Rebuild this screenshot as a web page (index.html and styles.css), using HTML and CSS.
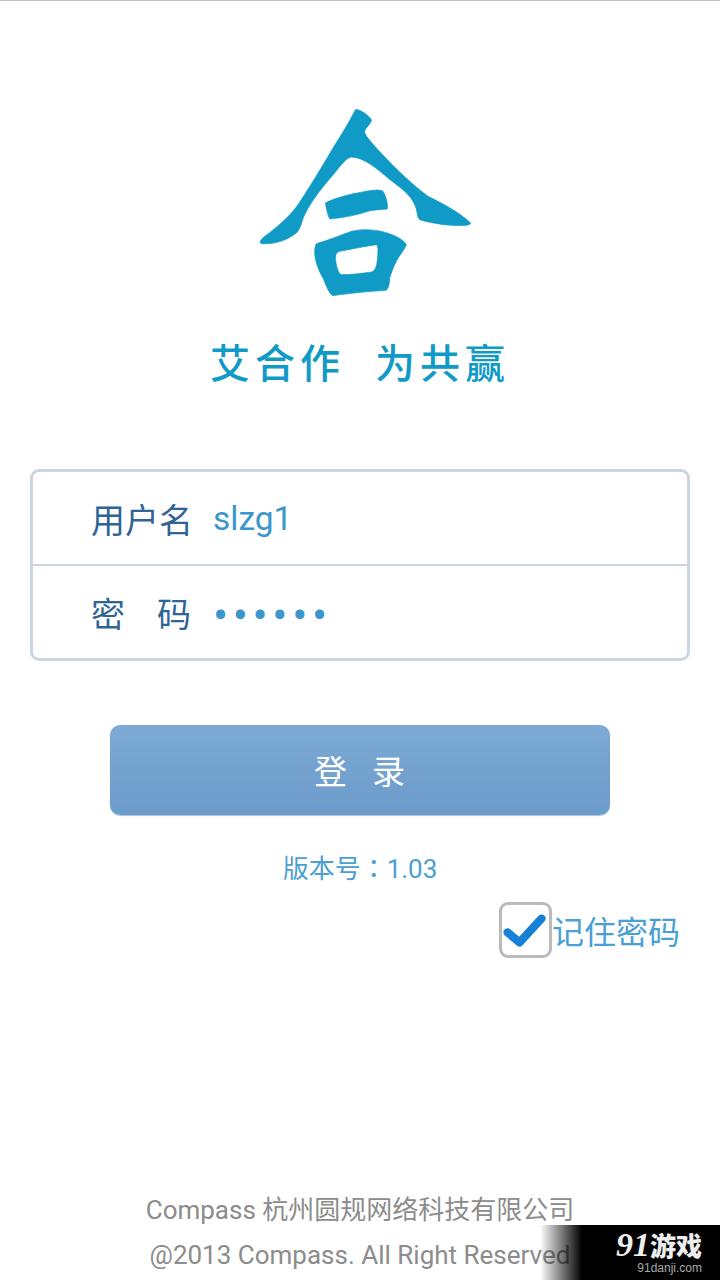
FILE: index.html
```html
<!DOCTYPE html>
<html lang="zh-CN">
<head>
    <meta charset="UTF-8">
    <meta name="viewport" content="width=device-width, initial-scale=1.0">
    <title>登录</title>
    <link rel="stylesheet" href="styles.css">
</head>
<body>
    <main class="page">
        <!-- Logo -->
        <svg class="logo" viewBox="170 55 645 570" role="img" aria-label="合">
            <path d="M462 60C475 58 500 75 510 90C512 100 495 110 490 125C490 135 500 145 510 158C560 215 620 275 680 320C720 340 770 365 808 400C805 410 780 408 750 407C720 405 680 398 655 390C645 380 650 365 640 345C625 310 590 290 560 265C525 235 490 205 450 202C435 205 420 225 400 250C370 285 335 325 310 375C300 395 300 415 285 430C255 455 210 465 180 462C172 458 178 450 190 440C225 415 265 380 290 345C320 300 360 235 395 175C420 135 445 95 462 60Z"/>
            <path d="M372 340C400 325 450 312 480 308C505 302 535 298 545 305C555 320 560 345 558 358C540 360 510 360 490 368C460 378 420 385 385 388C378 375 375 355 372 340Z"/>
            <path fill-rule="evenodd" d="M345 462C380 452 410 440 450 425C490 415 540 420 580 438C595 445 610 455 615 465C610 480 595 495 585 515C575 535 570 550 565 565C565 580 562 595 555 602C500 605 440 612 395 618C385 615 375 590 365 565C350 540 340 510 340 485C340 475 342 468 345 462ZM415 485C450 478 490 470 525 465C532 470 530 490 528 510C526 530 522 543 510 547C480 552 445 555 420 555C410 550 405 530 403 510C402 495 405 488 415 485Z"/>
        </svg>
        <div class="slogan"><span>艾合作</span><span>为共赢</span></div>

        <!-- Login form -->
        <section class="card">
            <div class="row">
                <span class="label">用户名</span>
                <span class="value">slzg1</span>
            </div>
            <div class="row">
                <span class="label label-wide">密码</span>
                <span class="dots">••••••</span>
            </div>
        </section>

        <button class="login" type="button">登录</button>
        <p class="version" lang="zh-TW">版本号：1.03</p>

        <div class="remember">
            <span class="check">
                <svg viewBox="0 0 50 40"><path d="M6 22L19 33L43 7"/></svg>
            </span>
            <span>记住密码</span>
        </div>

        <footer class="footer">
            <p>Compass 杭州圆规网络科技有限公司</p>
            <p>@2013 Compass. All Right Reserved</p>
        </footer>
    </main>

    <div class="watermark">
        <div class="wm-title"><span class="wm-num">91</span>游戏</div>
        <div class="wm-url">91danji.com</div>
    </div>
</body>
</html>
```

FILE: styles.css
```css
/* Basis */
* {
    box-sizing: border-box;
}

body {
    margin: 0;
    background-color: #fff;
    font-family: Roboto, "Noto Sans CJK SC", sans-serif;
}

p {
    margin: 0;
}

.page {
    position: relative;
    height: 1280px;
    overflow: hidden;
    border-top: 1px solid #c4c4c4;
    padding-top: 107px;
    display: flex;
    flex-direction: column;
    align-items: center;
}

.logo {
    width: 217px;
    height: 190px;
    margin-left: 10px;
    fill: #109ac6;
    stroke: #109ac6;
    stroke-width: 2;
    stroke-linejoin: round;
}

.slogan {
    margin-top: 42px;
    height: 50px;
    display: flex;
    gap: 30px;
    font-size: 40px;
    font-weight: 500;
    line-height: 50px;
    letter-spacing: 5px;
    color: #109ac6;
}

/* Formulier */
.card {
    width: 660px;
    height: 192px;
    margin-top: 79px;
    border: 3px solid #ccd6e2;
    border-radius: 9px;
    display: flex;
    flex-direction: column;
}

.row {
    flex: 1;
    display: flex;
    align-items: center;
    padding-left: 58px;
}

.row + .row {
    border-top: 2px solid #ccd6e2;
}

.label {
    width: 122px;
    font-size: 34px;
    color: #2f6496;
    white-space: nowrap;
}

.label-wide {
    letter-spacing: 32px;
}

.value {
    font-size: 33.5px;
    color: #3b96cc;
}

.dots {
    padding-top: 8px;
    font-size: 45px;
    line-height: 50px;
    letter-spacing: 4.6px;
    color: #3b96cc;
}

.login {
    width: 500px;
    height: 90px;
    margin-top: 64px;
    border: none;
    border-radius: 10px;
    background: linear-gradient(#7daad5, #6b9bca);
    box-shadow: 0 1px 1px #a9c3de;
    font-family: inherit;
    font-size: 33px;
    letter-spacing: 25px;
    text-indent: 24px;
    color: #fff;
}

.version {
    margin-top: 36px;
    font-family: Roboto, "Noto Sans CJK TC", sans-serif;
    font-size: 26px;
    line-height: 36px;
    color: #4a9fd4;
}

.remember {
    align-self: flex-end;
    margin-top: 15px;
    margin-right: 40px;
    display: flex;
    align-items: center;
    font-size: 32px;
    color: #4a9fd4;
}

.check {
    width: 53px;
    height: 56px;
    border: 3px solid #bbb;
    border-radius: 9px;
    display: flex;
    align-items: center;
    justify-content: center;
}

.check svg {
    width: 46px;
    height: 37px;
    fill: none;
    stroke: #1580d6;
    stroke-width: 9;
    stroke-linecap: round;
    stroke-linejoin: round;
}

.footer {
    margin-top: auto;
    padding-bottom: 2px;
    font-size: 26px;
    line-height: 45px;
    text-align: center;
    color: #8c8c8c;
}

/* Watermerk */
.watermark {
    position: absolute;
    right: 0;
    bottom: 0;
    width: 180px;
    height: 55px;
    padding: 7px 18px 0 0;
    background: linear-gradient(90deg, rgba(0, 0, 0, 0) 0, #000 42px);
    text-align: right;
}

.wm-title {
    font-size: 26px;
    line-height: 26px;
    font-weight: 900;
    color: #eee;
}

.wm-num {
    font-family: "Liberation Serif", serif;
    font-style: italic;
    font-size: 34px;
}

.wm-url {
    font-family: "Liberation Sans", sans-serif;
    font-size: 12px;
    line-height: 16px;
    color: #a8a8a8;
}
```
